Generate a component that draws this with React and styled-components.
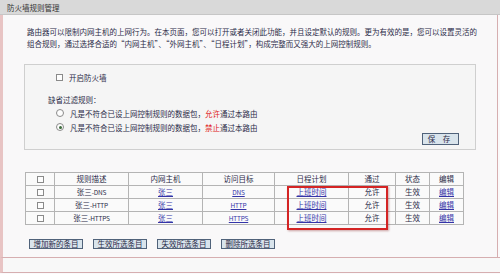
import React from "react";
import styled, { createGlobalStyle } from "styled-components";

const GlobalStyle = createGlobalStyle`
  html, body {
    margin: 0;
    padding: 0;
    background: #fbfafb;
  }
  body {
    font-family: "Noto Sans CJK SC", "Liberation Sans", sans-serif;
    color: #2b2b48;
  }
`;

const Page = styled.div`
  width: 500px;
  height: 274px;
  display: flex;
  flex-direction: column;
  font-size: 7.5px;
  overflow: hidden;
`;

const TitleBar = styled.div`
  height: 15px;
  line-height: 15px;
  padding-left: 7px;
  background: #d9d9d9;
  border-bottom: 1px solid #c6c6c6;
  box-sizing: border-box;
  color: #333;
`;

const Main = styled.div`
  width: 498px;
  height: 242px;
  box-sizing: border-box;
  border-left: 3px solid #e8c4c4;
  border-right: 1px solid #d6aeb0;
  background: #f9f8f9;
  padding-top: 11px;
`;

const Intro = styled.p`
  margin: 0 0 14px 24px;
  width: 455px;
  line-height: 12px;
`;

const SettingsBox = styled.div`
  margin-left: 21px;
  width: 452px;
  height: 86px;
  box-sizing: border-box;
  border: 1px solid #cfcfcf;
  background: #f5f5f5;
  display: flex;
  flex-direction: column;
  padding: 5px 0 0 31px;
`;

const OptionRow = styled.label`
  display: flex;
  align-items: center;
  gap: 6px;
  height: 14px;
`;

const Check = styled.span`
  width: 7px;
  height: 7px;
  box-sizing: border-box;
  border: 1px solid #8a8a8a;
  background: #fdfdfd;
  display: inline-block;
  vertical-align: middle;
`;

const Radio = styled.span`
  width: 8px;
  height: 8px;
  box-sizing: border-box;
  border: 1px solid #8a8a8a;
  border-radius: 50%;
  background: #fdfdfd;
  display: inline-flex;
  align-items: center;
  justify-content: center;
  &::after {
    content: "";
    width: 3px;
    height: 3px;
    border-radius: 50%;
    background: ${({ $on }) => ($on ? "#3a6a3a" : "transparent")};
  }
`;

const Legend = styled.div`
  margin: 10px 0 0 -8px;
  height: 12px;
  line-height: 12px;
`;

const Red = styled.span`
  color: #e02020;
`;

const BoxFooter = styled.div`
  display: flex;
  justify-content: flex-end;
  padding-right: 16px;
  margin-top: -1px;
`;

const Button = styled.button`
  font-family: inherit;
  font-size: 7.5px;
  color: #2b2b48;
  background: #d9e4ec;
  border: 1px solid #50627a;
  padding: 0;
  height: ${({ $h }) => $h || 10}px;
  width: ${({ $w }) => $w}px;
  line-height: 1;
  letter-spacing: ${({ $ls }) => $ls || 0}px;
`;

const TableWrap = styled.div`
  position: relative;
  margin: 22px 0 0 22px;
  width: 438px;
`;

const Table = styled.table`
  border-collapse: collapse;
  table-layout: fixed;
  width: 438px;
  background: #fafafa;
  td,
  th {
    border: 1px solid #b4b4b4;
    height: 12px;
    padding: 0;
    text-align: center;
    font-weight: normal;
    line-height: 12px;
  }
`;

const Latin = styled.span`
  font-size: 6.5px;
  letter-spacing: -0.2px;
`;

const CellLink = styled.a`
  color: #3434a8;
  text-decoration: underline;
`;

const Highlight = styled.div`
  position: absolute;
  left: 262px;
  top: 14px;
  width: 101px;
  height: 44px;
  box-sizing: border-box;
  border: 2px solid #d42424;
  box-shadow: 1px 1px 2px rgba(120, 0, 0, 0.35);
  pointer-events: none;
`;

const Actions = styled.div`
  display: flex;
  gap: 10px;
  margin: 14px 0 0 26px;
`;

const Footer = styled.div`
  height: 16px;
  box-sizing: border-box;
  border-top: 1px solid #d6aeb0;
  border-bottom: 1px solid #d6aeb0;
  border-left: 3px solid #e8c4c4;
  background: #f8f8f8;
`;

const rules = [
  ["DNS", "张三", "DNS"],
  ["HTTP", "张三", "HTTP"],
  ["HTTPS", "张三", "HTTPS"],
];

const App = () => {
  return (
    <Page>
      <GlobalStyle />
      <TitleBar>防火墙规则管理</TitleBar>
      <Main>
        <Intro>
          路由器可以限制内网主机的上网行为。在本页面，您可以打开或者关闭此功能，并且设定默认的规则。更为有效的是，您可以设置灵活的组合规则，通过选择合适的“内网主机”、“外网主机”、“日程计划”，构成完整而又强大的上网控制规则。
        </Intro>
        <SettingsBox>
          <OptionRow>
            <Check />
            <span>开启防火墙</span>
          </OptionRow>
          <Legend>缺省过滤规则：</Legend>
          <OptionRow>
            <Radio />
            <span>
              凡是不符合已设上网控制规则的数据包，<Red>允许</Red>通过本路由
            </span>
          </OptionRow>
          <OptionRow>
            <Radio $on />
            <span>
              凡是不符合已设上网控制规则的数据包，<Red>禁止</Red>通过本路由
            </span>
          </OptionRow>
          <BoxFooter>
            <Button $w={37} $h={12} $ls={3}>
              保 存
            </Button>
          </BoxFooter>
        </SettingsBox>
        <TableWrap>
          <Table>
            <colgroup>
              <col style={{ width: 29 }} />
              <col style={{ width: 74 }} />
              <col style={{ width: 74 }} />
              <col style={{ width: 72 }} />
              <col style={{ width: 74 }} />
              <col style={{ width: 47 }} />
              <col style={{ width: 34 }} />
              <col style={{ width: 34 }} />
            </colgroup>
            <thead>
              <tr>
                <th>
                  <Check />
                </th>
                <th>规则描述</th>
                <th>内网主机</th>
                <th>访问目标</th>
                <th>日程计划</th>
                <th>通过</th>
                <th>状态</th>
                <th>编辑</th>
              </tr>
            </thead>
            <tbody>
              {rules.map(([proto, host, target]) => (
                <tr key={proto}>
                  <td>
                    <Check />
                  </td>
                  <td>
                    张三<Latin>-{proto}</Latin>
                  </td>
                  <td>
                    <CellLink>{host}</CellLink>
                  </td>
                  <td>
                    <CellLink>
                      <Latin>{target}</Latin>
                    </CellLink>
                  </td>
                  <td>
                    <CellLink>上班时间</CellLink>
                  </td>
                  <td>允许</td>
                  <td>生效</td>
                  <td>
                    <CellLink>编辑</CellLink>
                  </td>
                </tr>
              ))}
            </tbody>
          </Table>
          <Highlight />
        </TableWrap>
        <Actions>
          <Button $w={54}>增加新的条目</Button>
          <Button $w={54}>生效所选条目</Button>
          <Button $w={54}>失效所选条目</Button>
          <Button $w={54}>删除所选条目</Button>
        </Actions>
      </Main>
      <Footer />
    </Page>
  );
};

export default App;
